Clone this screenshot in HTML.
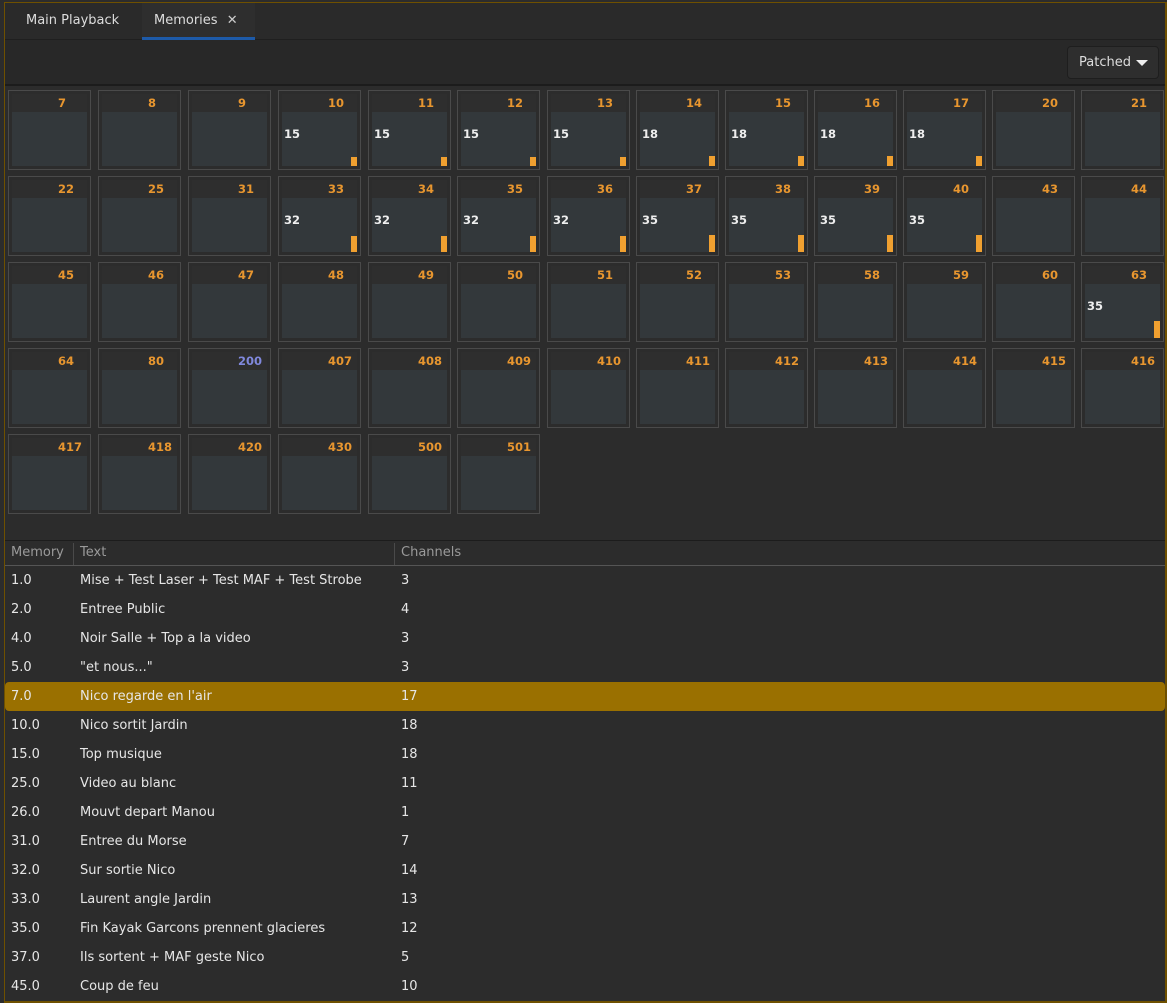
<!DOCTYPE html>
<html><head><meta charset="utf-8"><style>
*{box-sizing:border-box;margin:0;padding:0}
body{width:1167px;height:1003px;background:#2c2c2c;font-family:"DejaVu Sans","Liberation Sans",sans-serif;color:#e0e0e0;position:relative;overflow:hidden;font-size:13px}
.frame{position:absolute;left:4px;top:2px;width:1163px;height:1001px;border:1px solid #6e5000;border-right-width:2px;border-bottom-width:2px}
.tabs{position:absolute;left:5px;top:3px;width:1160px;height:37px;background:#2a2a2a;border-bottom:1px solid #1f1f1f}
.tab{position:absolute;top:0;height:37px;line-height:36px;font-size:13px;color:#ddd}
.tb{position:absolute;left:5px;top:40px;width:1160px;height:46px;background:#282828;border-bottom:2px solid #1c1c1c}
.btn{position:absolute;right:6px;top:6px;width:92px;height:33px;border:1px solid #1e1e1e;border-radius:4px;background:#2e2e2e;font-size:13px;line-height:31px;padding-left:11px;color:#ddd}
.c{position:absolute;width:83px;height:80px;border:1px solid #4a4a4a}
.c .in{position:absolute;left:3px;top:3px;right:3px;bottom:3px;background:#33383b}
.c .hd{position:absolute;left:0;top:0;right:0;height:18px;background:#2e2e2e}
.c .n{position:absolute;left:46px;top:2px;font-size:11.5px;font-weight:bold;color:#e8962f}
.c .n.b{color:#8088dc}
.c .v{position:absolute;left:2px;top:33px;font-size:11.5px;font-weight:bold;color:#eee}
.c .bar{position:absolute;right:0;bottom:0;width:6px;background:#f0a030}
.th{position:absolute;left:5px;top:540px;width:1160px;height:26px;border-top:1px solid #1c1c1c;border-bottom:1px solid #555;color:#9a9a9a;font-size:13px;line-height:24px}
.th span,.r span{position:absolute}
.sep{position:absolute;top:2px;width:1px;height:22px;background:#4a4a4a}
.r{position:absolute;left:5px;width:1160px;height:29px;line-height:29px;font-size:13px;color:#e6e6e6}
.r.sel{background:#9a7000;border-radius:4px}
</style></head><body>
<div class="frame"></div>
<div class="tabs">
<div class="tab" style="left:21px">Main Playback</div>
<div class="tab" style="left:137px;width:113px;background:#2e2e2e;border-bottom:3px solid #1d5aa8;padding-left:12px">Memories <span style="margin-left:5px;color:#ccc">✕</span></div>
</div>
<div class="tb"><div class="btn">Patched <span style="display:inline-block;width:0;height:0;border-left:6px solid transparent;border-right:6px solid transparent;border-top:6px solid #eee;vertical-align:middle;margin-left:1px"></span></div></div>

<div class="c" style="left:8px;top:90px"><div class="in"><div class="hd"></div><span class="n">7</span></div></div>
<div class="c" style="left:98px;top:90px"><div class="in"><div class="hd"></div><span class="n">8</span></div></div>
<div class="c" style="left:188px;top:90px"><div class="in"><div class="hd"></div><span class="n">9</span></div></div>
<div class="c" style="left:278px;top:90px"><div class="in"><div class="hd"></div><span class="n">10</span><span class="v">15</span><div class="bar" style="height:9px"></div></div></div>
<div class="c" style="left:368px;top:90px"><div class="in"><div class="hd"></div><span class="n">11</span><span class="v">15</span><div class="bar" style="height:9px"></div></div></div>
<div class="c" style="left:457px;top:90px"><div class="in"><div class="hd"></div><span class="n">12</span><span class="v">15</span><div class="bar" style="height:9px"></div></div></div>
<div class="c" style="left:547px;top:90px"><div class="in"><div class="hd"></div><span class="n">13</span><span class="v">15</span><div class="bar" style="height:9px"></div></div></div>
<div class="c" style="left:636px;top:90px"><div class="in"><div class="hd"></div><span class="n">14</span><span class="v">18</span><div class="bar" style="height:10px"></div></div></div>
<div class="c" style="left:725px;top:90px"><div class="in"><div class="hd"></div><span class="n">15</span><span class="v">18</span><div class="bar" style="height:10px"></div></div></div>
<div class="c" style="left:814px;top:90px"><div class="in"><div class="hd"></div><span class="n">16</span><span class="v">18</span><div class="bar" style="height:10px"></div></div></div>
<div class="c" style="left:903px;top:90px"><div class="in"><div class="hd"></div><span class="n">17</span><span class="v">18</span><div class="bar" style="height:10px"></div></div></div>
<div class="c" style="left:992px;top:90px"><div class="in"><div class="hd"></div><span class="n">20</span></div></div>
<div class="c" style="left:1081px;top:90px"><div class="in"><div class="hd"></div><span class="n">21</span></div></div>

<div class="c" style="left:8px;top:176px"><div class="in"><div class="hd"></div><span class="n">22</span></div></div>
<div class="c" style="left:98px;top:176px"><div class="in"><div class="hd"></div><span class="n">25</span></div></div>
<div class="c" style="left:188px;top:176px"><div class="in"><div class="hd"></div><span class="n">31</span></div></div>
<div class="c" style="left:278px;top:176px"><div class="in"><div class="hd"></div><span class="n">33</span><span class="v">32</span><div class="bar" style="height:16px"></div></div></div>
<div class="c" style="left:368px;top:176px"><div class="in"><div class="hd"></div><span class="n">34</span><span class="v">32</span><div class="bar" style="height:16px"></div></div></div>
<div class="c" style="left:457px;top:176px"><div class="in"><div class="hd"></div><span class="n">35</span><span class="v">32</span><div class="bar" style="height:16px"></div></div></div>
<div class="c" style="left:547px;top:176px"><div class="in"><div class="hd"></div><span class="n">36</span><span class="v">32</span><div class="bar" style="height:16px"></div></div></div>
<div class="c" style="left:636px;top:176px"><div class="in"><div class="hd"></div><span class="n">37</span><span class="v">35</span><div class="bar" style="height:17px"></div></div></div>
<div class="c" style="left:725px;top:176px"><div class="in"><div class="hd"></div><span class="n">38</span><span class="v">35</span><div class="bar" style="height:17px"></div></div></div>
<div class="c" style="left:814px;top:176px"><div class="in"><div class="hd"></div><span class="n">39</span><span class="v">35</span><div class="bar" style="height:17px"></div></div></div>
<div class="c" style="left:903px;top:176px"><div class="in"><div class="hd"></div><span class="n">40</span><span class="v">35</span><div class="bar" style="height:17px"></div></div></div>
<div class="c" style="left:992px;top:176px"><div class="in"><div class="hd"></div><span class="n">43</span></div></div>
<div class="c" style="left:1081px;top:176px"><div class="in"><div class="hd"></div><span class="n">44</span></div></div>

<div class="c" style="left:8px;top:262px"><div class="in"><div class="hd"></div><span class="n">45</span></div></div>
<div class="c" style="left:98px;top:262px"><div class="in"><div class="hd"></div><span class="n">46</span></div></div>
<div class="c" style="left:188px;top:262px"><div class="in"><div class="hd"></div><span class="n">47</span></div></div>
<div class="c" style="left:278px;top:262px"><div class="in"><div class="hd"></div><span class="n">48</span></div></div>
<div class="c" style="left:368px;top:262px"><div class="in"><div class="hd"></div><span class="n">49</span></div></div>
<div class="c" style="left:457px;top:262px"><div class="in"><div class="hd"></div><span class="n">50</span></div></div>
<div class="c" style="left:547px;top:262px"><div class="in"><div class="hd"></div><span class="n">51</span></div></div>
<div class="c" style="left:636px;top:262px"><div class="in"><div class="hd"></div><span class="n">52</span></div></div>
<div class="c" style="left:725px;top:262px"><div class="in"><div class="hd"></div><span class="n">53</span></div></div>
<div class="c" style="left:814px;top:262px"><div class="in"><div class="hd"></div><span class="n">58</span></div></div>
<div class="c" style="left:903px;top:262px"><div class="in"><div class="hd"></div><span class="n">59</span></div></div>
<div class="c" style="left:992px;top:262px"><div class="in"><div class="hd"></div><span class="n">60</span></div></div>
<div class="c" style="left:1081px;top:262px"><div class="in"><div class="hd"></div><span class="n">63</span><span class="v">35</span><div class="bar" style="height:17px"></div></div></div>

<div class="c" style="left:8px;top:348px"><div class="in"><div class="hd"></div><span class="n">64</span></div></div>
<div class="c" style="left:98px;top:348px"><div class="in"><div class="hd"></div><span class="n">80</span></div></div>
<div class="c" style="left:188px;top:348px"><div class="in"><div class="hd"></div><span class="n b">200</span></div></div>
<div class="c" style="left:278px;top:348px"><div class="in"><div class="hd"></div><span class="n">407</span></div></div>
<div class="c" style="left:368px;top:348px"><div class="in"><div class="hd"></div><span class="n">408</span></div></div>
<div class="c" style="left:457px;top:348px"><div class="in"><div class="hd"></div><span class="n">409</span></div></div>
<div class="c" style="left:547px;top:348px"><div class="in"><div class="hd"></div><span class="n">410</span></div></div>
<div class="c" style="left:636px;top:348px"><div class="in"><div class="hd"></div><span class="n">411</span></div></div>
<div class="c" style="left:725px;top:348px"><div class="in"><div class="hd"></div><span class="n">412</span></div></div>
<div class="c" style="left:814px;top:348px"><div class="in"><div class="hd"></div><span class="n">413</span></div></div>
<div class="c" style="left:903px;top:348px"><div class="in"><div class="hd"></div><span class="n">414</span></div></div>
<div class="c" style="left:992px;top:348px"><div class="in"><div class="hd"></div><span class="n">415</span></div></div>
<div class="c" style="left:1081px;top:348px"><div class="in"><div class="hd"></div><span class="n">416</span></div></div>

<div class="c" style="left:8px;top:434px"><div class="in"><div class="hd"></div><span class="n">417</span></div></div>
<div class="c" style="left:98px;top:434px"><div class="in"><div class="hd"></div><span class="n">418</span></div></div>
<div class="c" style="left:188px;top:434px"><div class="in"><div class="hd"></div><span class="n">420</span></div></div>
<div class="c" style="left:278px;top:434px"><div class="in"><div class="hd"></div><span class="n">430</span></div></div>
<div class="c" style="left:368px;top:434px"><div class="in"><div class="hd"></div><span class="n">500</span></div></div>
<div class="c" style="left:457px;top:434px"><div class="in"><div class="hd"></div><span class="n">501</span></div></div>

<div class="th"><span style="left:6px">Memory</span><div class="sep" style="left:68px"></div><span style="left:75px">Text</span><div class="sep" style="left:389px"></div><span style="left:396px">Channels</span></div>

<div class="r" style="top:566px"><span style="left:6px">1.0</span><span style="left:75px">Mise + Test Laser + Test MAF + Test Strobe</span><span style="left:396px">3</span></div>
<div class="r" style="top:595px"><span style="left:6px">2.0</span><span style="left:75px">Entree Public</span><span style="left:396px">4</span></div>
<div class="r" style="top:624px"><span style="left:6px">4.0</span><span style="left:75px">Noir Salle + Top a la video</span><span style="left:396px">3</span></div>
<div class="r" style="top:653px"><span style="left:6px">5.0</span><span style="left:75px">"et nous..."</span><span style="left:396px">3</span></div>
<div class="r sel" style="top:682px"><span style="left:6px">7.0</span><span style="left:75px">Nico regarde en l'air</span><span style="left:396px">17</span></div>
<div class="r" style="top:711px"><span style="left:6px">10.0</span><span style="left:75px">Nico sortit Jardin</span><span style="left:396px">18</span></div>
<div class="r" style="top:740px"><span style="left:6px">15.0</span><span style="left:75px">Top musique</span><span style="left:396px">18</span></div>
<div class="r" style="top:769px"><span style="left:6px">25.0</span><span style="left:75px">Video au blanc</span><span style="left:396px">11</span></div>
<div class="r" style="top:798px"><span style="left:6px">26.0</span><span style="left:75px">Mouvt depart Manou</span><span style="left:396px">1</span></div>
<div class="r" style="top:827px"><span style="left:6px">31.0</span><span style="left:75px">Entree du Morse</span><span style="left:396px">7</span></div>
<div class="r" style="top:856px"><span style="left:6px">32.0</span><span style="left:75px">Sur sortie Nico</span><span style="left:396px">14</span></div>
<div class="r" style="top:885px"><span style="left:6px">33.0</span><span style="left:75px">Laurent angle Jardin</span><span style="left:396px">13</span></div>
<div class="r" style="top:914px"><span style="left:6px">35.0</span><span style="left:75px">Fin Kayak Garcons prennent glacieres</span><span style="left:396px">12</span></div>
<div class="r" style="top:943px"><span style="left:6px">37.0</span><span style="left:75px">Ils sortent + MAF geste Nico</span><span style="left:396px">5</span></div>
<div class="r" style="top:972px"><span style="left:6px">45.0</span><span style="left:75px">Coup de feu</span><span style="left:396px">10</span></div>
</body></html>
